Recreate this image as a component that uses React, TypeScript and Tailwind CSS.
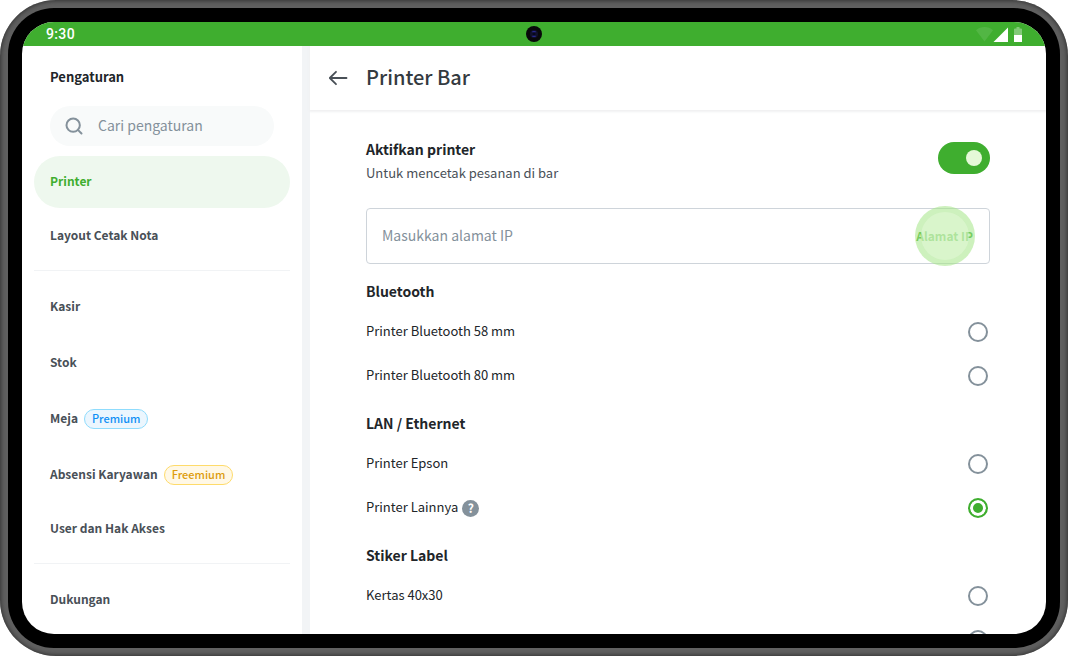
import { useState } from "react";
import { Search } from "lucide-react";

type Badge = "Premium" | "Freemium";

const badgeStyles: Record<Badge, string> = {
  Premium: "border-[#8fdcfd] bg-[#ebf6fe] text-[#1090f5]",
  Freemium: "border-[#fedb6b] bg-[#fff8e6] text-[#dd9c0c]",
};

const sections = [
  {
    title: "Bluetooth",
    options: [
      { id: "bt58", label: "Printer Bluetooth 58 mm" },
      { id: "bt80", label: "Printer Bluetooth 80 mm" },
    ],
  },
  {
    title: "LAN / Ethernet",
    options: [
      { id: "epson", label: "Printer Epson" },
      { id: "other", label: "Printer Lainnya", help: true },
    ],
  },
  {
    title: "Stiker Label",
    options: [{ id: "label40", label: "Kertas 40x30" }],
  },
];

const radioClass =
  "mr-0.5 size-5 shrink-0 appearance-none rounded-full border-2 border-[#84919b] bg-white checked:border-[#3fae2f] checked:bg-[#3fae2f] checked:shadow-[inset_0_0_0_3px_#fff]";

function StatusBar() {
  return (
    <div className="relative flex h-6 shrink-0 items-center justify-between bg-[#3fae2f] px-6">
      <span className="font-[Roboto] text-sm font-medium tracking-wide text-white">9:30</span>
      <svg className="absolute left-1/2 top-1 -translate-x-1/2" width="16" height="16" viewBox="0 0 16 16">
        <circle cx="8" cy="8" r="8" fill="#08080a" />
        <circle cx="8" cy="8" r="4" fill="#11112c" />
        <ellipse cx="8" cy="5.7" rx="2" ry="0.8" fill="#2a2a94" />
        <ellipse cx="8" cy="10.3" rx="2" ry="0.8" fill="#2a2a94" />
        <circle cx="8" cy="8" r="1.4" fill="#07071c" />
      </svg>
      <svg width="46" height="16" viewBox="0 0 46 16" fill="#fff">
        <path d="M0 4.2C2.4 2 5.2 1 8.500 1S14.600 2 17 4.200L8.500 15.500Z" opacity="0.1" />
        <path d="M17.500 16H32V1.500Z" />
        <path d="M38 3.500a1 1 0 0 1 1-1h1.500V1h3v1.500H45a1 1 0 0 1 1 1V9h-8Z" opacity="0.35" />
        <path d="M38 9h8v6.500a.5.5 0 0 1-.5.5h-7a.5.5 0 0 1-.5-.5Z" />
      </svg>
    </div>
  );
}

function NavItem({ label, badge, tall }: { label: string; badge?: Badge; tall?: boolean }) {
  const active = label === "Printer";
  return (
    <a
      href="#"
      aria-current={active ? "page" : undefined}
      className={`flex shrink-0 items-center gap-1.5 rounded-full px-4 pb-0.5 text-xs font-bold ${tall ? "h-14" : "h-13"} ${
        active ? "bg-[#eef8ee] text-[#3fae2f]" : "text-[#495057]"
      }`}
    >
      {label}
      {badge && (
        <span
          className={`mt-0.5 flex h-5 items-center rounded-full border px-[7px] pb-0.5 text-[11px] font-medium ${badgeStyles[badge]}`}
        >
          {badge}
        </span>
      )}
    </a>
  );
}

function Sidebar() {
  return (
    <aside className="flex w-72 shrink-0 flex-col overflow-hidden border-r-8 border-[#f2f4f6] px-3 pt-5">
      <h2 className="px-4 text-[13px] leading-[22px] font-bold text-[#212529]">Pengaturan</h2>
      <label className="mx-4 mt-[18px] mb-2.5 flex h-10 shrink-0 items-center gap-3.5 rounded-full bg-[#f8fafa] px-3.5">
        <Search className="size-5 shrink-0 text-[#84919b]" strokeWidth={2.4} />
        <input
          type="search"
          aria-label="Cari pengaturan"
          placeholder="Cari pengaturan"
          className="w-full min-w-0 bg-transparent pb-0.5 text-sm outline-none placeholder:text-[#84919b]"
        />
      </label>
      <nav className="flex flex-col">
        <div className="flex flex-col gap-0.5">
          <NavItem label="Printer" />
          <NavItem label="Layout Cetak Nota" />
        </div>
        <hr className="my-2 border-[#f1f3f5]" />
        <NavItem label="Kasir" tall />
        <NavItem label="Stok" tall />
        <NavItem label="Meja" badge="Premium" tall />
        <NavItem label="Absensi Karyawan" badge="Freemium" tall />
        <NavItem label="User dan Hak Akses" />
        <hr className="my-2 border-[#f1f3f5]" />
        <NavItem label="Dukungan" tall />
      </nav>
    </aside>
  );
}

function PrinterSettings() {
  const [enabled, setEnabled] = useState(true);
  const [selected, setSelected] = useState("other");

  return (
    <main className="flex min-w-0 flex-1 flex-col">
      <header className="flex h-16 shrink-0 items-center gap-4 px-4 shadow-[0_1px_2px_1px_#f0f1f2]">
        <button type="button" aria-label="Kembali" className="flex size-6 items-center justify-center text-[#495057]">
          <svg width="24" height="24" viewBox="0 0 24 24" fill="none" stroke="currentColor" strokeWidth="1.800" strokeLinecap="round" strokeLinejoin="round">
            <path d="M20.500 12H4M10 5.800 3.800 12l6.200 6.200" />
          </svg>
        </button>
        <h1 className="pb-0.5 text-xl font-medium text-[#343a40]">Printer Bar</h1>
      </header>

      <div className="min-h-0 flex-1 overflow-hidden px-14 pt-7">
        <div className="mb-[22px] flex items-start justify-between">
          <div>
            <label htmlFor="printer-enabled" className="block text-sm leading-[22px] font-bold text-[#212529]">
              Aktifkan printer
            </label>
            <p className="text-[13px] leading-[26px] text-[#495057]">Untuk mencetak pesanan di bar</p>
          </div>
          <input
            id="printer-enabled"
            type="checkbox"
            role="switch"
            checked={enabled}
            onChange={(e) => setEnabled(e.target.checked)}
            className="mt-1 flex h-8 w-13 shrink-0 appearance-none items-center rounded-full bg-[#adb5bd] px-2 before:size-4 before:rounded-full before:bg-[#e5f9d8] checked:justify-end checked:bg-[#3fae2f]"
          />
        </div>

        <div className="mb-0.5 flex h-14 items-center rounded border border-[#ced4da] pr-4 pl-[15px]">
          <input
            type="text"
            aria-label="Masukkan alamat IP"
            placeholder="Masukkan alamat IP"
            className="min-w-0 flex-1 bg-transparent pb-0.5 text-sm outline-none placeholder:text-[#84919b]"
          />
          <button type="button" className="relative text-xs font-bold text-[#3fae2f]">
            Alamat IP
            {/* touch indicator */}
            <span className="absolute top-1/2 left-1/2 flex size-15 -translate-1/2 items-center justify-center rounded-full bg-[#a4e686]/55">
              <span className="size-12 rounded-full bg-[#e6fad9]/50" />
            </span>
          </button>
        </div>

        {sections.map((section) => (
          <section key={section.title} className="pt-3">
            <h2 className="mb-1.5 text-sm leading-[26px] font-bold text-[#212529]">{section.title}</h2>
            {section.options.map((option) => (
              <div key={option.id} className="flex h-11 items-center gap-1">
                <label htmlFor={option.id} className="pb-0.5 text-[13px] text-[#212529]">
                  {option.label}
                </label>
                {"help" in option && (
                  <button
                    type="button"
                    aria-label="Bantuan"
                    className="flex size-[17px] items-center justify-center rounded-full bg-[#84919b] text-xs font-bold text-white"
                  >
                    ?
                  </button>
                )}
                <span className="flex-1" />
                <input
                  id={option.id}
                  type="radio"
                  name="printer"
                  checked={selected === option.id}
                  onChange={() => setSelected(option.id)}
                  className={radioClass}
                />
              </div>
            ))}
          </section>
        ))}
        <div className="flex h-11 items-center justify-end">
          <input
            type="radio"
            name="printer"
            aria-label="Kertas lainnya"
            checked={selected === "labelOther"}
            onChange={() => setSelected("labelOther")}
            className={radioClass}
          />
        </div>
      </div>
    </main>
  );
}

export default function App() {
  return (
    <div className="h-screen bg-white font-['Noto_Sans_CJK_SC',sans-serif]">
      <div className="h-full rounded-[56px] bg-[#606060] p-2 shadow-[inset_0_0_4px_1px_#333]">
        <div className="h-full rounded-[46px] bg-black p-3.5">
          <div className="flex h-full flex-col overflow-hidden rounded-[32px] bg-white">
            <StatusBar />
            <div className="flex min-h-0 flex-1">
              <Sidebar />
              <PrinterSettings />
            </div>
          </div>
        </div>
      </div>
    </div>
  );
}
